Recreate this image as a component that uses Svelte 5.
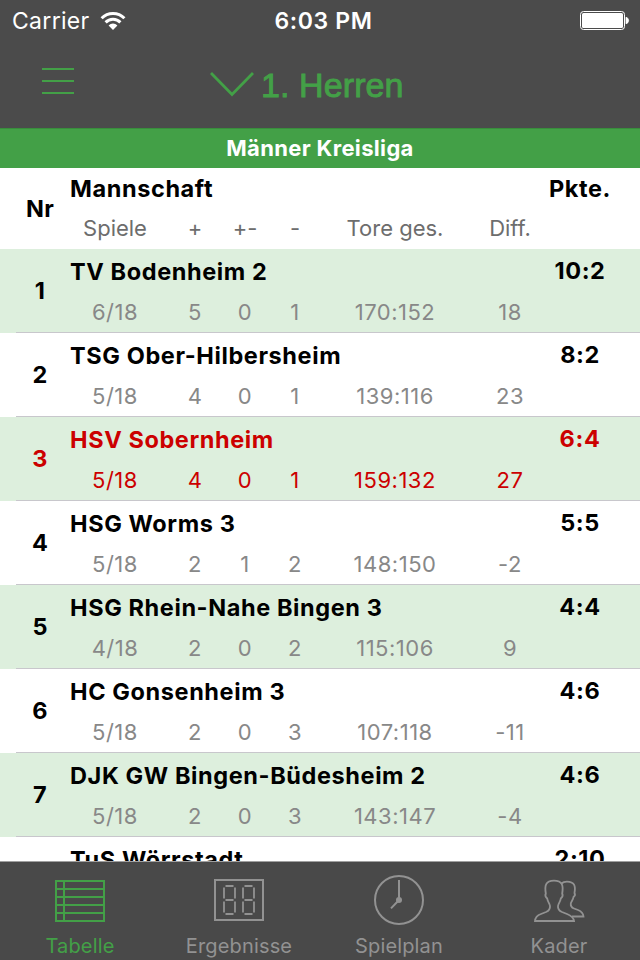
<script lang="ts">
  interface Stats {
    played: string;
    won: number;
    drawn: number;
    lost: number;
    goals: string;
    diff: number;
  }

  interface Team {
    name: string;
    points: string;
    stats?: Stats;
  }

  const OWN_CLUB = "HSV Sobernheim";

  const teams: Team[] = [
    { name: "TV Bodenheim 2", points: "10:2", stats: { played: "6/18", won: 5, drawn: 0, lost: 1, goals: "170:152", diff: 18 } },
    { name: "TSG Ober-Hilbersheim", points: "8:2", stats: { played: "5/18", won: 4, drawn: 0, lost: 1, goals: "139:116", diff: 23 } },
    { name: "HSV Sobernheim", points: "6:4", stats: { played: "5/18", won: 4, drawn: 0, lost: 1, goals: "159:132", diff: 27 } },
    { name: "HSG Worms 3", points: "5:5", stats: { played: "5/18", won: 2, drawn: 1, lost: 2, goals: "148:150", diff: -2 } },
    { name: "HSG Rhein-Nahe Bingen 3", points: "4:4", stats: { played: "4/18", won: 2, drawn: 0, lost: 2, goals: "115:106", diff: 9 } },
    { name: "HC Gonsenheim 3", points: "4:6", stats: { played: "5/18", won: 2, drawn: 0, lost: 3, goals: "107:118", diff: -11 } },
    { name: "DJK GW Bingen-Büdesheim 2", points: "4:6", stats: { played: "5/18", won: 2, drawn: 0, lost: 3, goals: "143:147", diff: -4 } },
    { name: "TuS Wörrstadt", points: "2:10" },
  ];

  const tabs = ["Tabelle", "Ergebnisse", "Spielplan", "Kader"];

  let activeTab = $state("Tabelle");
</script>

<div class="screen">
  <header>
    <div class="status">
      <div class="carrier">
        <span>Carrier</span>
        <svg width="26" height="20" viewBox="0 0 26 20">
          <g fill="none" stroke="#fff" stroke-width="3">
            <path d="M1.6 7.2a16 16 0 0 1 22.8 0" />
            <path d="M5.6 11.4a10.4 10.4 0 0 1 14.8 0" />
          </g>
          <path d="M13 19l-4.4-4.6a6.2 6.2 0 0 1 8.8 0z" fill="#fff" />
        </svg>
      </div>
      <div class="time">6:03 PM</div>
      <div class="battery">
        <svg width="50" height="20" viewBox="0 0 50 20">
          <rect x="0.5" y="0.5" width="44" height="18" rx="3" fill="none" stroke="#fff" />
          <rect x="2" y="2" width="41" height="15" rx="1.5" fill="#fff" />
          <path d="M46 6.2a3.4 3.4 0 0 1 0 6.6z" fill="#fff" stroke="#fff" stroke-width="0.8" />
        </svg>
      </div>
    </div>
    <nav>
      <button class="menu" aria-label="Menü">
        <svg width="32" height="26" viewBox="0 0 32 26">
          <path d="M0 1h32M0 13h32M0 25h32" stroke="currentColor" stroke-width="2" />
        </svg>
      </button>
      <button class="title">
        <svg width="44" height="25" viewBox="0 0 44 25">
          <path d="M1 1l21 21.5L43 1" fill="none" stroke="currentColor" stroke-width="2.8" />
        </svg>
        <span>1. Herren</span>
      </button>
    </nav>
  </header>

  <div class="league">Männer Kreisliga</div>

  <main>
    <div class="row head">
      <div class="nr">Nr</div>
      <div class="body">
        <div class="line">
          <span class="name">Mannschaft</span>
          <span class="points">Pkte.</span>
        </div>
        <div class="stats">
          <span>Spiele</span>
          <span>+</span>
          <span>+-</span>
          <span>-</span>
          <span>Tore ges.</span>
          <span>Diff.</span>
        </div>
      </div>
    </div>
    {#each teams as team, i}
      <div class="row" class:even={i % 2 === 0} class:own={team.name === OWN_CLUB}>
        <div class="nr">{i + 1}</div>
        <div class="body">
          <div class="line">
            <span class="name">{team.name}</span>
            <span class="points">{team.points}</span>
          </div>
          {#if team.stats}
            <div class="stats">
              <span>{team.stats.played}</span>
              <span>{team.stats.won}</span>
              <span>{team.stats.drawn}</span>
              <span>{team.stats.lost}</span>
              <span>{team.stats.goals}</span>
              <span>{team.stats.diff}</span>
            </div>
          {/if}
        </div>
      </div>
    {/each}
  </main>

  <footer>
    {#each tabs as tab}
      <button class="tab" class:active={tab === activeTab} onclick={() => (activeTab = tab)}>
        <svg width="52" height="52" viewBox="0 0 52 52" fill="none" stroke="currentColor" stroke-width="2">
          {#if tab === "Tabelle"}
            <path d="M2 7h48v40H2zM2 15h48M2 23h48M2 31h48M2 39h48M10 7v40" />
          {:else if tab === "Ergebnisse"}
            <rect x="2" y="6" width="48" height="40" />
            <g stroke-width="1.8">
              {#each [10, 29] as x}
                <path d="M{x + 2.5} 12h8M{x + 2.5} 26h8M{x + 2.5} 40h8" />
                <path d="M{x + 1} 13.5v11M{x + 1} 27.5v11M{x + 12} 13.5v11M{x + 12} 27.5v11" />
              {/each}
            </g>
          {:else if tab === "Spielplan"}
            <circle cx="26" cy="26" r="24" />
            <path d="M26 6v20l-8 8.4" />
            <circle cx="26" cy="26" r="3" fill="currentColor" stroke="none" />
          {:else}
            <g stroke-width="1.8">
              <path
                d="M2 47C2.2 43.5 4 41.5 8 40L13 38C16 36.7 17.3 35 17 32C16.8 29.5 14.5 27.5 14.2 24.5C12.3 23 11.8 21.5 12.8 19.5C11.5 11.5 12.5 6.6 21 6.6S30.5 11.5 29.2 19.5C30.2 21.5 29.7 23 27.8 24.5C27.5 27.5 25.2 29.5 25 32C24.7 35 26 36.7 29 38L34 40C38 41.5 40.5 43.5 41 47Z"
              />
              <path
                d="M28.5 9.5C30 8 32 7.6 34 7.6C41.5 7.6 42.8 12 41.5 19C42.3 20.5 42 22 40.5 23C40.2 26 38 27.5 37.8 29.5C37.5 32 38.5 33.5 41 34.5L45 36C48.5 37.5 50.3 39.5 50.5 42.5H39"
              />
            </g>
          {/if}
        </svg>
        <span>{tab}</span>
      </button>
    {/each}
  </footer>
</div>

<style>
  :global(body) {
    margin: 0;
    overflow: hidden;
  }

  .screen {
    display: flex;
    flex-direction: column;
    width: 640px;
    height: 960px;
    background: #fff;
    color: #000;
    font-family: Inter, "Liberation Sans", sans-serif;
  }

  button {
    display: flex;
    padding: 0;
    border: 0;
    background: none;
    color: inherit;
    font: inherit;
  }

  svg {
    display: block;
    flex: none;
  }

  header {
    height: 128px;
    background: #4b4b4b;
    color: #43a047;
  }

  .status {
    display: grid;
    grid-template-columns: 1fr auto 1fr;
    align-items: center;
    height: 40px;
    padding: 0 10px 0 12px;
    color: #fff;
    font-size: 23px;
    line-height: 42px;
  }

  .carrier {
    display: flex;
    align-items: center;
    gap: 10px;
    letter-spacing: 0.3px;
  }

  .time {
    padding-left: 5px;
    font-weight: 600;
    letter-spacing: 0.6px;
  }

  .battery {
    justify-self: end;
  }

  nav {
    display: grid;
    grid-template-columns: 210px 1fr;
    height: 88px;
  }

  .menu {
    padding: 28px 0 0 42px;
  }

  .title {
    align-items: flex-start;
    gap: 7px;
    padding-top: 25px;
    font: 500 34px/40px "Liberation Sans", sans-serif;
    letter-spacing: 0.1px;
    -webkit-text-stroke: 0.9px currentColor;
  }

  .title svg {
    margin-top: 7px;
  }

  .league {
    height: 39px;
    border-top: 1px solid #388e3c;
    background: #43a047;
    color: #fff;
    font-size: 22px;
    font-weight: 700;
    letter-spacing: 0.33px;
    line-height: 39px;
    text-align: center;
  }

  main {
    flex: 1;
    min-height: 0;
    overflow: hidden;
  }

  .row {
    display: grid;
    grid-template-columns: 60px 1fr;
    box-sizing: border-box;
    height: 84px;
    padding-left: 10px;
    background: linear-gradient(#c8c7cc, #c8c7cc) 16px 100% / 100% 1px no-repeat;
  }

  .row.head {
    height: 81px;
    background: none;
  }

  .row.even {
    background-color: #ddefdd;
  }

  .nr,
  .name,
  .points {
    font-size: 23.5px;
    font-weight: 700;
    letter-spacing: 0.6px;
  }

  .nr {
    letter-spacing: 0.2px;
    line-height: 83px;
    text-align: center;
  }

  .line {
    display: flex;
    justify-content: space-between;
    height: 43px;
    padding-right: 20px;
    line-height: 45px;
  }

  .points {
    width: 80px;
    line-height: 43px;
    text-align: center;
  }

  .stats {
    display: grid;
    grid-template-columns: 90px 70px 30px 70px 130px 100px;
    color: #888;
    font-size: 22px;
    letter-spacing: 0.5px;
    line-height: 41px;
    text-align: center;
  }

  .head .nr {
    line-height: 81px;
  }

  .head .line {
    height: 40px;
    line-height: 41px;
  }

  .head .points {
    line-height: 41px;
  }

  .head .stats {
    color: #6d6d6d;
    letter-spacing: 0;
  }

  .own,
  .own .stats {
    color: #cc0000;
  }

  footer {
    display: grid;
    grid-template-columns: 160px 158px 162px 158px;
    height: 98px;
    border-top: 1px solid #a0a0a0;
    background: #494949;
    color: #929292;
  }

  .tab {
    flex-direction: column;
    align-items: center;
    padding-top: 12px;
    font-size: 20px;
    line-height: 40px;
    letter-spacing: 0.15px;
  }

  .tab.active {
    color: #43a047;
  }
</style>
